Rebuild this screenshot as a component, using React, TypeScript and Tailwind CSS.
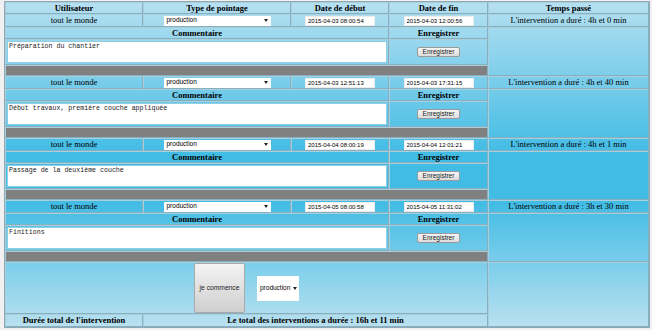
import React from "react";

const entries = [
  { debut: "2015-04-03 08:00:54", fin: "2015-04-03 12:00:56", duree: "4h et 0 min", comment: "Préparation du chantier" },
  { debut: "2015-04-03 12:51:13", fin: "2015-04-03 17:31:15", duree: "4h et 40 min", comment: "Début travaux, première couche appliquée" },
  { debut: "2015-04-04 08:00:19", fin: "2015-04-04 12:01:21", duree: "4h et 1 min", comment: "Passage de la deuxième couche" },
  { debut: "2015-04-05 08:00:58", fin: "2015-04-05 11:31:02", duree: "3h et 30 min", comment: "Finitions" },
];

const cell = "border border-t-[#a9cfdd] border-l-[#a9cfdd] border-r-[#86afc0] border-b-[#86afc0] p-0 text-center align-middle";
const head = `${cell} font-bold text-[8.5px] leading-none`;

function Arrow() {
  return (
    <svg width="4" height="3" viewBox="0 0 4 3" className="shrink-0">
      <path d="M0 0h4L2 3z" fill="#222" />
    </svg>
  );
}

function FakeSelect() {
  return (
    <div className="mx-auto flex h-[10px] w-[107px] items-center justify-between bg-white pl-[3px] pr-[3px] font-['Liberation_Sans'] text-[6.5px] leading-none text-black">
      <span>production</span>
      <Arrow />
    </div>
  );
}

function DateBox({ value }: { value: string }) {
  return (
    <input
      readOnly
      value={value}
      className="mx-auto block h-[10px] w-[70px] border border-[#ececec] bg-white px-[2px] font-['Liberation_Sans'] text-[6px] leading-none text-black outline-none"
    />
  );
}

export default function App() {
  return (
    <div className="h-[330px] w-[652px] bg-[#f1f1f1] pl-[4px] pt-[1px] font-['Liberation_Serif',serif] text-black">
      <table className="w-[646px] table-fixed border-separate border-spacing-0 border border-[#8ea9b5] bg-[linear-gradient(to_bottom,#b6e0f1_0%,#41bce5_47%,#42bce5_62%,#bae1f0_100%)]">
        <colgroup>
          <col className="w-[138px]" />
          <col className="w-[148px]" />
          <col className="w-[98px]" />
          <col className="w-[99px]" />
          <col />
        </colgroup>
        <tbody>
          <tr className="h-[12px]">
            <td className={head}>Utilisateur</td>
            <td className={head}>Type de pointage</td>
            <td className={head}>Date de début</td>
            <td className={head}>Date de fin</td>
            <td className={head}>Temps passé</td>
          </tr>
          {entries.map((e) => (
            <React.Fragment key={e.debut}>
              <tr className="h-[13px]">
                <td className={`${cell} text-[8.5px] leading-none`}>tout le monde</td>
                <td className={cell}>
                  <FakeSelect />
                </td>
                <td className={cell}>
                  <DateBox value={e.debut} />
                </td>
                <td className={cell}>
                  <DateBox value={e.fin} />
                </td>
                <td className={`${cell} text-[8.5px] leading-none`}>L'intervention a duré : {e.duree}</td>
              </tr>
              <tr className="h-[12px]">
                <td colSpan={3} className={head}>Commentaire</td>
                <td className={head}>Enregistrer</td>
                <td rowSpan={3} className={cell}></td>
              </tr>
              <tr className="h-[26px]">
                <td colSpan={3} className={`${cell} px-px`}>
                  <textarea
                    readOnly
                    value={e.comment}
                    className="block h-[22px] w-full resize-none border border-[#8fcfe6] bg-white px-[1px] py-[1px] font-['Liberation_Mono',monospace] text-[6.6px] leading-tight text-[#222] outline-none"
                  />
                </td>
                <td className={cell}>
                  <button className="mx-auto block h-[10px] w-[43px] rounded-[2px] border border-[#9a9a9a] bg-[linear-gradient(to_bottom,#f6f6f6,#dcdcdc)] font-['Liberation_Sans'] text-[6.5px] leading-none text-[#222]">
                    Enregistrer
                  </button>
                </td>
              </tr>
              <tr className="h-[11px]">
                <td colSpan={4} className={`${cell} bg-[#808080]`}></td>
              </tr>
            </React.Fragment>
          ))}
          <tr className="h-[52px]">
            <td colSpan={4} className={cell}>
              <div className="flex items-center justify-center gap-[12px]">
                <button className="h-[50px] w-[51px] rounded-[2px] border border-[#a9a9a9] bg-[linear-gradient(to_bottom,#f3f3f3,#cfcfcf)] font-['Liberation_Sans'] text-[6.7px] leading-none text-[#222]">
                  je commence
                </button>
                <div className="flex h-[25px] w-[42px] items-center gap-[3px] bg-white pl-[3px] font-['Liberation_Sans'] text-[6.5px] leading-none">
                  <span>production</span>
                  <Arrow />
                </div>
              </div>
            </td>
            <td rowSpan={2} className={cell}></td>
          </tr>
          <tr className="h-[13px]">
            <td className={head}>Durée total de l'intervention</td>
            <td colSpan={3} className={head}>Le total des interventions a durée : 16h et 11 min</td>
          </tr>
        </tbody>
      </table>
    </div>
  );
}
